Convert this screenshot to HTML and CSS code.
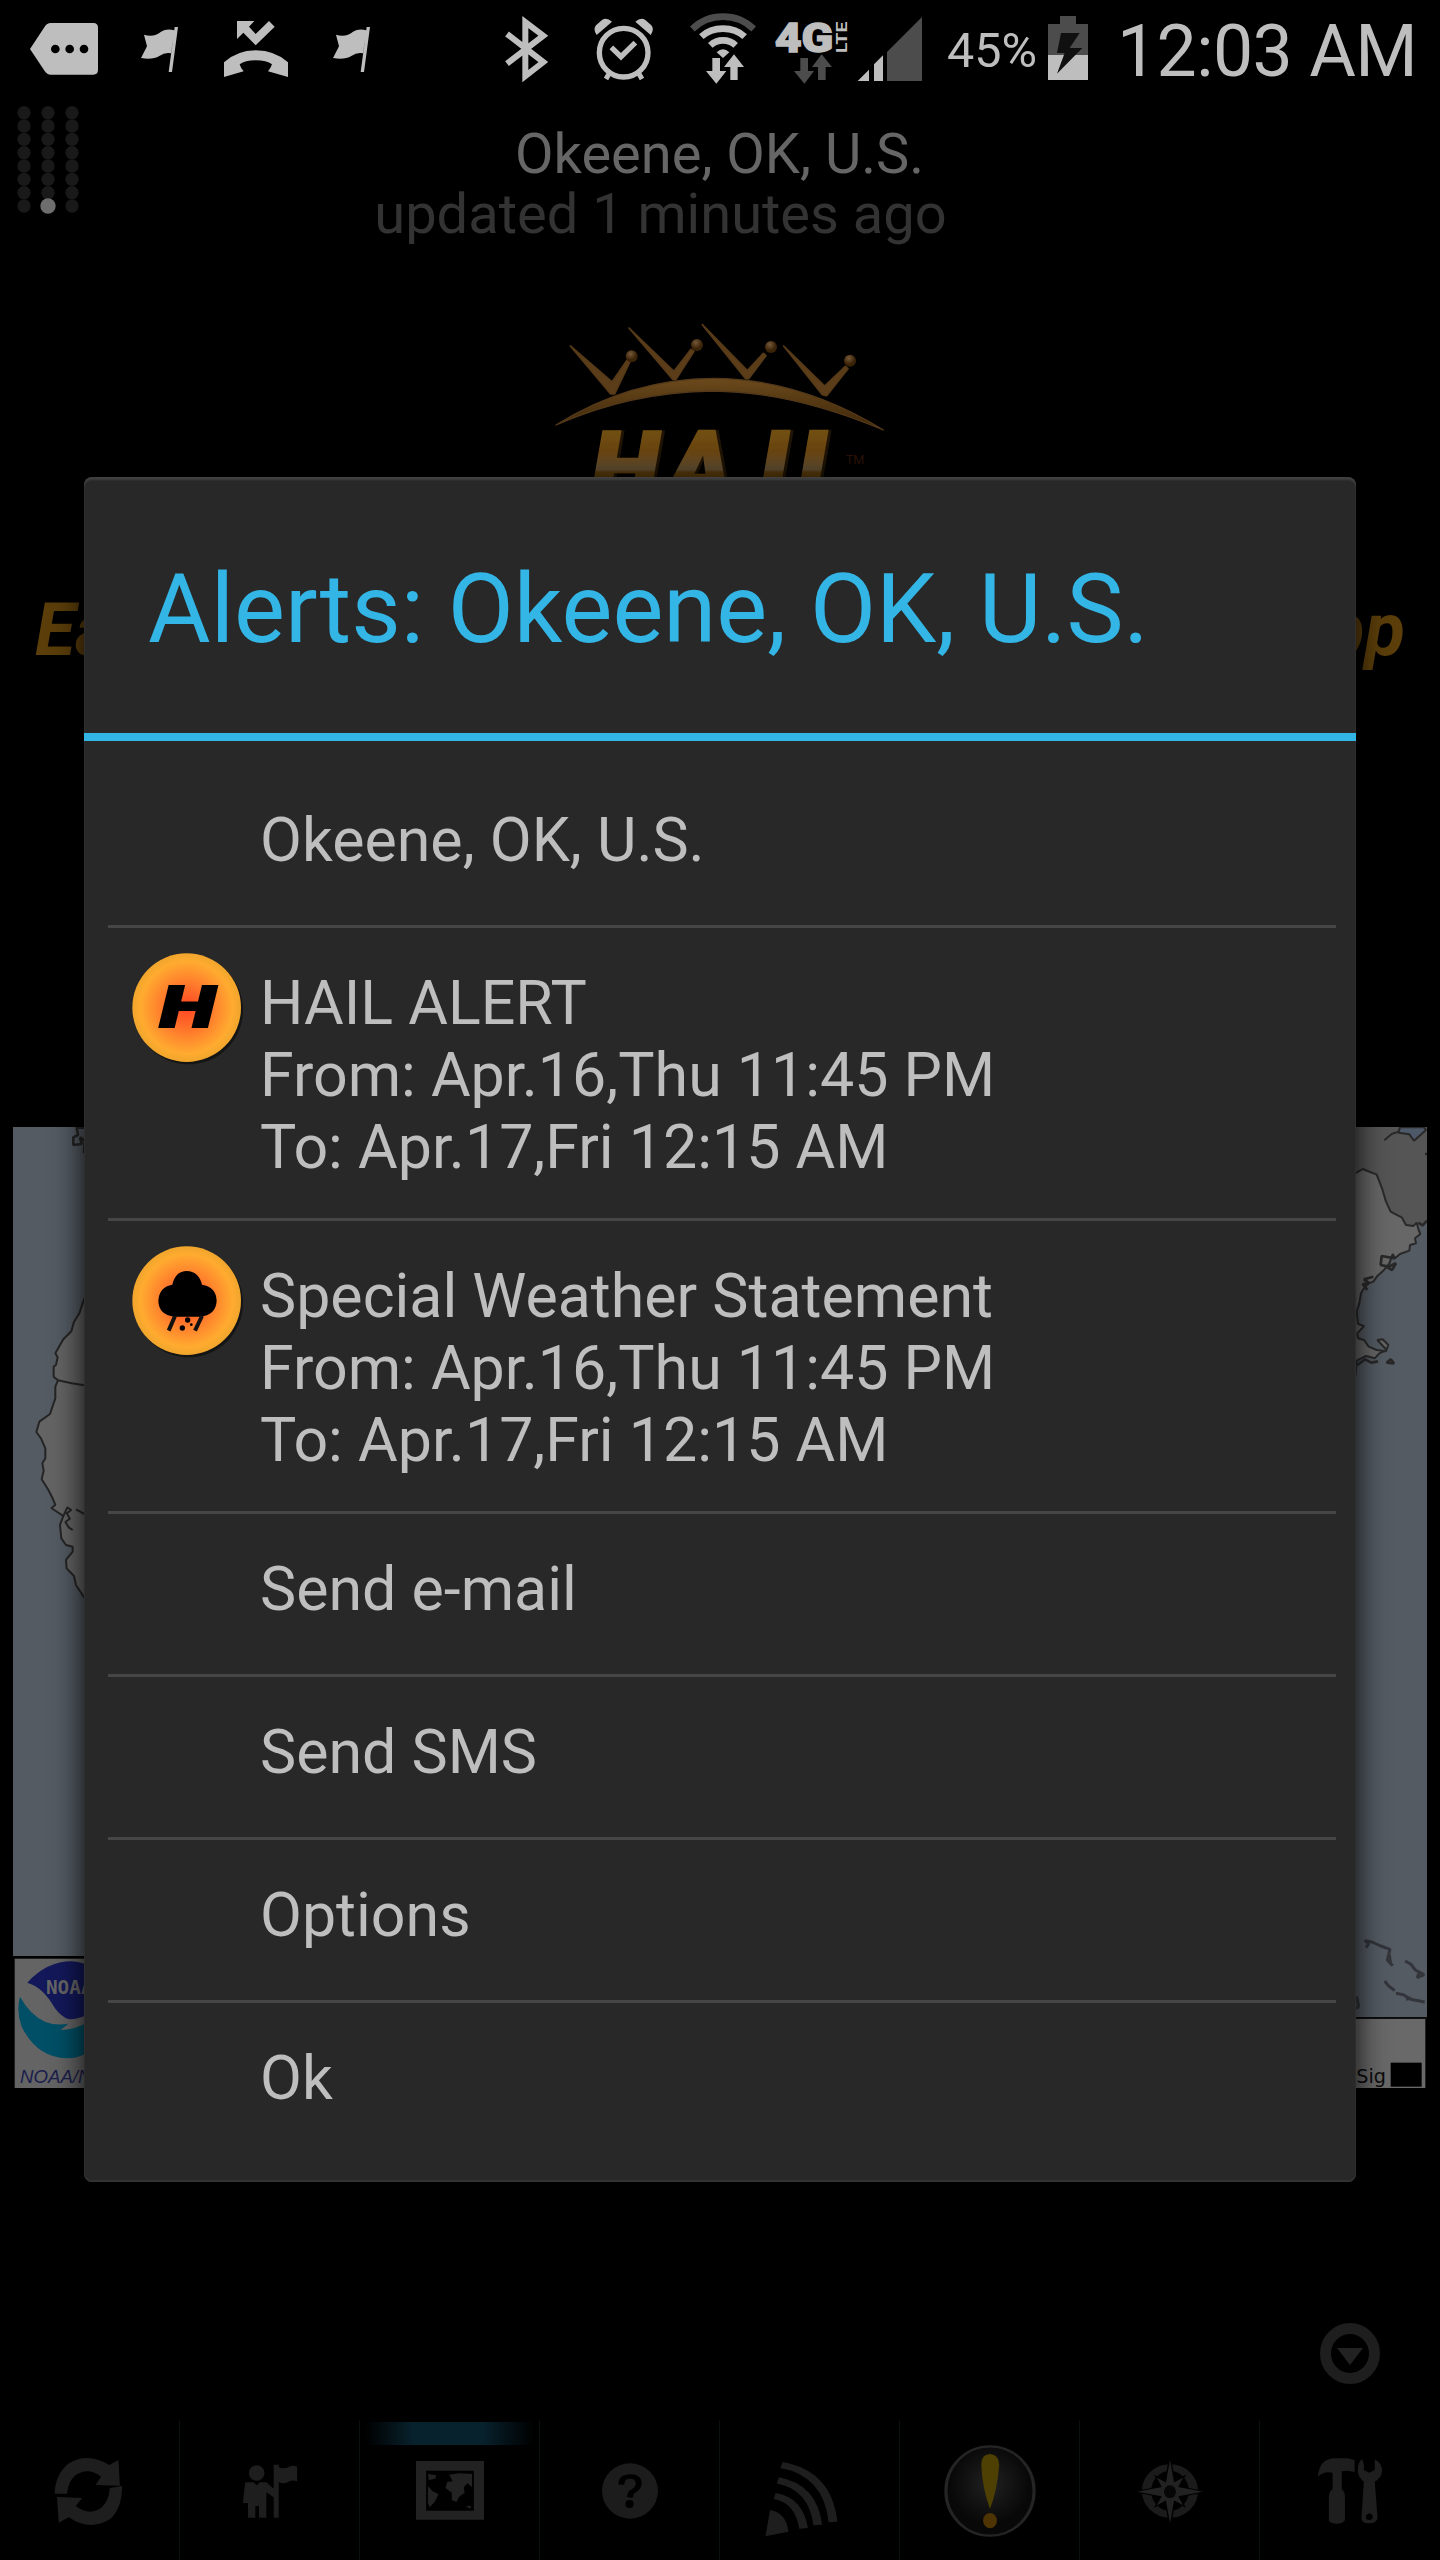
FILE: index.html
```html
<!DOCTYPE html>
<html lang="en">
<head>
  <meta charset="UTF-8">
  <title>Hail Alerts</title>
  <link rel="stylesheet" href="styles.css">
</head>
<body>
  <div class="screen">

    <!-- Phone status bar -->
    <div class="status-bar">
      <svg class="st-message" width="68" height="100" viewBox="90 0 204 300">
        <path d="M90 147 L134 80 Q141 69 152 69 H280 Q294 69 294 83 V210 Q294 224 280 224 H152 Q141 224 134 213 Z" fill="#bebebe"/>
        <circle cx="166" cy="147" r="13"/><circle cx="209" cy="147" r="13"/><circle cx="252" cy="147" r="13"/>
      </svg>
      <svg class="st-flag" width="37" height="100" viewBox="423 0 111 300">
        <path d="M432 104 Q462 113 483 95 Q500 85 523 91 L513 160 Q495 156 478 168 Q458 180 423 174 L441 139 Z M524 81 H534 L516 216 H506 Z" fill="#bebebe"/>
      </svg>
      <svg class="st-missed" width="64" height="100" viewBox="672 0 192 300">
        <path d="M711 63 H763 L747 80 L767 102 L807 63 L824 80 L767 136 L730 98 L711 117 Z M672 231 V187 Q710 152 767 151 Q826 152 864 187 V231 L804 214 Q812 205 816 193 Q800 181 767 181 Q735 181 719 193 Q722 205 731 214 Z" fill="#bebebe"/>
      </svg>
      <svg class="st-flag2" width="37" height="100" viewBox="423 0 111 300">
        <path d="M432 104 Q462 113 483 95 Q500 85 523 91 L513 160 Q495 156 478 168 Q458 180 423 174 L441 139 Z M524 81 H534 L516 216 H506 Z" fill="#bebebe"/>
      </svg>
      <svg class="st-bluetooth" width="45" height="100" viewBox="75 0 135 300">
        <path d="M81 102 L190 186 L136 228 V66 L190 107 L81 191" fill="none" stroke="#bebebe" stroke-width="18"/>
      </svg>
      <svg class="st-alarm" width="60" height="100" viewBox="342 0 180 300">
        <g fill="none" stroke="#bebebe">
          <circle cx="431" cy="158" r="73" stroke-width="16"/>
          <path d="M394 142 L423 170 L466 128" stroke-width="16"/>
          <path d="M388 220 L378 237 M476 220 L486 237" stroke-width="15"/>
        </g>
        <path d="M350 105 Q338 88 348 76 L366 60 Q380 51 396 65 Z M512 105 Q524 88 514 76 L496 60 Q482 51 466 65 Z" fill="#bebebe"/>
      </svg>
      <svg class="st-wifi" width="66" height="100" viewBox="630 0 198 300">
        <g fill="none" stroke="#bebebe" stroke-width="20">
          <path d="M637 87 Q675 50 729 50 Q783 50 821 87" stroke="#4c4c4c"/>
          <path d="M664 110 Q690 86 729 86 Q768 86 794 110"/>
          <path d="M691 136 Q707 121 729 121 Q751 121 767 136"/>
        </g>
        <path d="M710 157 Q729 139 748 157 L729 174 Z M697 174 H720 V213 H739 L709 251 L678 213 H697 Z M751 240 V201 H732 L762 163 L792 201 H773 V240 Z" fill="#bebebe"/>
      </svg>
      <svg class="st-lte" width="74" height="100" viewBox="885 0 222 300">
        <text class="net-4g" x="884" y="155" textLength="176" lengthAdjust="spacingAndGlyphs">4G</text>
        <text class="net-lte" transform="translate(1101 159) rotate(-90)" textLength="94" lengthAdjust="spacingAndGlyphs">LTE</text>
        <path d="M961 174 H984 V213 H1002 L973 251 L942 213 H961 Z M1014 240 V201 H996 L1025 163 L1056 201 H1037 V240 Z" fill="#4c4c4c"/>
      </svg>
      <svg class="st-signal" width="65" height="100" viewBox="1131 0 195 300">
        <path d="M1133 243 L1167 209 V243 Z M1182 243 V193 L1209 166 V243 Z" fill="#bebebe"/>
        <path d="M1221 243 V156 L1326 51 V243 Z" fill="#4c4c4c"/>
      </svg>
      <span class="battery-text">45%</span>
      <svg class="st-battery" width="40" height="100" viewBox="264 0 120 300">
        <path d="M300 48 H348 V72 H384 V165 H264 V72 H300 Z" fill="#4c4c4c"/>
        <path d="M264 165 H384 V240 H264 Z" fill="#bebebe"/>
        <path d="M303 99 H359 L329 144 H367 L291 221 L314 159 H291 Z" fill="#101010"/>
      </svg>
      <span class="clock">12:03 AM</span>
    </div>

    <!-- Location header -->
    <div class="header">
      <svg class="page-dots" width="63" height="110" viewBox="50 315 189 330">
        <defs>
          <g id="dotColumn" fill="#191919">
            <circle cx="71" cy="338" r="20"/><circle cx="71" cy="378" r="20"/><circle cx="71" cy="418" r="20"/><circle cx="71" cy="458" r="20"/>
            <circle cx="71" cy="498" r="20"/><circle cx="71" cy="538" r="20"/><circle cx="71" cy="578" r="20"/><circle cx="71" cy="618" r="20"/>
          </g>
        </defs>
        <use href="#dotColumn"/><use href="#dotColumn" x="72"/><use href="#dotColumn" x="144"/>
        <circle cx="143" cy="618" r="23" fill="#6e6e6e"/>
      </svg>
      <div class="header-text">
        <div class="location">Okeene, OK, U.S.</div>
        <div class="updated">updated 1 minutes ago</div>
      </div>
    </div>

    <svg class="logo" width="480" height="200" viewBox="0 0 1440 600">
      <defs>
        <linearGradient id="arcGold" x1="0" y1="0" x2="0" y2="1">
          <stop offset="0" stop-color="#6b4a1c"/><stop offset="1" stop-color="#3c2508"/>
        </linearGradient>
        <linearGradient id="letterGold" gradientUnits="userSpaceOnUse" x1="0" y1="390" x2="0" y2="600">
          <stop offset="0" stop-color="#714f12"/><stop offset="0.3" stop-color="#6a4510"/>
          <stop offset="0.57" stop-color="#655235"/><stop offset="0.6" stop-color="#5c3d0c"/><stop offset="1" stop-color="#5c3d0c"/>
        </linearGradient>
        <radialGradient id="ballGold" cx="0.4" cy="0.3">
          <stop offset="0" stop-color="#76583a"/><stop offset="1" stop-color="#3a2307"/>
        </radialGradient>
      </defs>
      <path d="M228 375 Q450 236 700 235 Q960 236 1210 390 Q940 276 700 273 Q450 276 228 375 Z" fill="url(#arcGold)" stroke="#53391a" stroke-width="4" stroke-linejoin="round"/>
      <path d="M271 138 L396 246 L440 182 L449 187 L404 282 L392 282 Z M447 84 L582 214 L633 148 L642 154 L588 238 L578 238 Z M667 74 L802 212 L850 160 L858 167 L806 236 L797 236 Z M911 138 L1034 258 L1096 199 L1104 206 L1040 287 L1027 284 Z" fill="#5c3d19" stroke="#573a18" stroke-width="5" stroke-linejoin="round"/>
      <circle cx="455" cy="169" r="18" fill="url(#ballGold)"/>
      <circle cx="651" cy="135" r="18" fill="url(#ballGold)"/>
      <circle cx="873" cy="141" r="18" fill="url(#ballGold)"/>
      <circle cx="1110" cy="182" r="18" fill="url(#ballGold)"/>
      <text class="logo-letters" x="334 562 838 955" y="603">HAIL</text>
      <text class="logo-tm" x="1097" y="491">TM</text>
    </svg>

    <div class="slogan"><span>Ea</span><span>pp</span></div>

    <!-- Radar map -->
    <svg class="map" width="1414" height="961" viewBox="13 1127 1414 961">
      <path d="M13 1127 H1427 V2017 H700 V1956 H13 Z" fill="#545b63"/>
      <g transform="translate(0 1120) scale(0.33333)" stroke="#252525" stroke-width="6" stroke-linejoin="bevel">
        <path d="M300 450 L252 538 L238 580 L222 606 L214 634 L190 658 L166 700 L173 712 L168 735 L161 740 L161 770 L174 781 L166 800 L166 835 L150 882 L118 905 L109 936 L123 955 L136 985 L136 1015 L127 1030 L131 1052 L125 1078 L144 1108 L158 1135 L166 1155 L154 1164 L190 1188 L180 1215 L184 1255 L198 1275 L218 1280 L218 1295 L198 1320 L200 1345 L222 1368 L228 1395 L252 1432 L300 1480 Z" fill="#646464"/>
        <path d="M174 781 L215 790 L300 803 M190 1188 L202 1162 L214 1170 L200 1180 L210 1196 L196 1206 L206 1222 L218 1230 M228 1168 L255 1183" fill="none"/>
        <path d="M252 23 L230 22 L234 45 L220 52 L220 75 L245 72 L240 52 L254 62 L252 100" fill="none" stroke-width="8"/>
      </g>
      <g transform="translate(1350 1120) scale(0.33333)" stroke="#292929" stroke-width="6" stroke-linejoin="bevel">
        <path d="M0 22 H231 V302 L220 314 L200 308 L190 318 L168 315 L155 292 L122 275 L80 166 L40 147 L0 160 Z" fill="#555" stroke="none"/>
        <path d="M0 160 L20 158 L38 147 L80 164 L96 205 L108 245 L122 275 L143 286 L155 292 L168 315 L190 318 L200 308 L206 330 L211 342 L195 355 L198 370 L180 375 L178 392 L150 402 L135 415 L128 402 L118 430 L102 450 L82 468 L70 485 L55 490 L42 505 L33 520 L28 550 L20 575 L24 612 L42 618 L22 640 L24 655 L42 660 L56 680 L80 690 L108 694 L115 675 L98 658 L82 660 L110 690 L88 700 L74 715 L48 708 L20 722 L16 770 L0 770 Z" fill="#676767"/>
        <path d="M231 302 L218 316 L205 308 M135 415 L95 408 L92 435 L115 440 L138 430 L126 450 L108 440 M70 470 L42 478 L58 490 L38 492 L52 510 M22 735 L45 718 L64 728 L84 724 M110 728 L122 718 L132 730 Z" fill="none" stroke-width="8"/>
        <path d="M150 22 L145 38 L178 43 L192 62 L228 30 L222 22 Z" fill="#4d5869"/>
        <path d="M103 61 L125 42 L148 34 M228 98 V106" fill="none"/>
      </g>
      <g transform="translate(1340 1900) scale(0.33333)" stroke="#33353b" stroke-width="9" fill="none" stroke-linejoin="bevel">
        <path d="M78 143 L86 131 L74 122 L96 126 L122 138 L150 148 L142 180 L158 197 M148 165 L152 192 M195 183 L212 192 L226 210 L252 224 L232 233 L236 220 M134 243 L145 257 L164 272 M168 280 L190 284 L212 298 L254 306 M198 298 L214 294 M50 290 L56 320 L48 325"/>
      </g>
      <g transform="translate(1340 1900) scale(0.33333)">
        <rect x="0" y="352" width="264" height="5" fill="#111"/>
        <rect x="0" y="357" width="256" height="208" fill="#696969"/>
        <text class="map-sig" x="49" y="548" textLength="89" lengthAdjust="spacingAndGlyphs">Sig</text>
        <rect x="152" y="488" width="93" height="72" fill="#000"/>
      </g>
      <!-- NOAA badge -->
      <g transform="translate(0 1900) scale(0.33333)">
        <rect x="44" y="176" width="300" height="390" fill="#646464"/>
        <path d="M82 248 Q140 184 216 184 Q290 190 330 250 L270 340 Q235 360 205 357 Q185 352 165 325 Q130 262 82 248 Z" fill="#13185a"/>
        <path d="M60 290 Q90 345 135 365 Q165 378 205 371 L182 390 Q235 390 300 345 Q300 475 200 475 Q110 472 65 380 Q48 335 60 290 Z" fill="#004f66"/>
        <text class="noaa-logo" x="138" y="282">NOAA</text>
        <text class="noaa-name" x="60" y="549">NOAA/NWS</text>
      </g>
    </svg>

    <svg class="expand" width="60" height="61" viewBox="0 0 60 61">
      <ellipse cx="30" cy="30.5" rx="24.5" ry="25" fill="none" stroke="#1e1e1e" stroke-width="11"/>
      <path d="M17 25 H43 L30 42 Z" fill="#222"/>
    </svg>

    <!-- Bottom toolbar -->
    <div class="toolbar">
      <div class="tab">
        <svg viewBox="0 60 392 420" preserveAspectRatio="none" fill="#1e1e1e">
          <path d="M119 281 Q120 225 148 192 Q190 155 238 195 L258 180 L261 257 L208 255 L220 230 Q192 200 165 225 Q148 245 146 281 Z"/>
          <path d="M266 258 Q266 325 240 357 Q195 395 150 352 L128 368 L124 291 L179 294 L165 318 Q195 350 222 322 Q238 300 239 264 Z"/>
        </svg>
      </div>
      <div class="tab">
        <svg viewBox="392 60 392 420" preserveAspectRatio="none" fill="#1e1e1e">
          <ellipse cx="559" cy="219" rx="17" ry="23"/>
          <path d="M534 247 H552 L559 256 L566 247 H580 L596 266 V194 H607 V202 Q618 208 630 200 Q638 194 647 200 V244 Q635 238 627 246 Q617 254 607 246 V353 H596 V292 L580 277 V353 H564 V318 H556 V353 H540 V309 H529 Z"/>
        </svg>
      </div>
      <div class="tab active">
        <svg viewBox="784 60 392 420" preserveAspectRatio="none" fill="#222">
          <path fill-rule="evenodd" d="M906 183 H1054 V359 H906 Z M928 212 V332 H1032 V212 Z"/>
          <path d="M932 222 L950 226 L948 236 L934 240 Z M932 258 L942 274 L955 282 L948 303 L936 322 L932 310 Z M978 224 L1000 220 L1028 222 V262 L1018 250 L1010 262 L1012 278 L1000 290 L994 306 L984 300 L984 278 L970 264 L974 246 L986 244 Z M1014 318 L1026 318 L1024 326 Z"/>
        </svg>
      </div>
      <div class="tab">
        <svg viewBox="1176 60 392 420" preserveAspectRatio="none">
          <ellipse cx="1372" cy="273" rx="61" ry="83" fill="#1c1c1c"/>
          <path d="M1353 254 Q1353 229 1373 229 Q1392 230 1391 253 Q1388 268 1375 277 L1371 292" fill="none" stroke="#000" stroke-width="13"/>
          <ellipse cx="1371" cy="312" rx="9" ry="12"/>
        </svg>
      </div>
      <div class="tab">
        <svg viewBox="0 360 392 420" preserveAspectRatio="none">
          <path d="M109 630 Q145 640 149 695 L99 709 Z" fill="#1e1e1e"/>
          <path d="M119 588 Q172 600 182 685 M126 541 Q202 560 213 675 M134 495 Q235 520 246 666" fill="none" stroke="#1e1e1e" stroke-width="19"/>
        </svg>
      </div>
      <div class="tab">
        <svg viewBox="392 360 392 420" preserveAspectRatio="none">
          <defs>
            <radialGradient id="alertGlass" cy="0.42"><stop offset="0" stop-color="#212121"/><stop offset="0.9" stop-color="#080808"/></radialGradient>
          </defs>
          <ellipse cx="588" cy="573" rx="96" ry="134" fill="url(#alertGlass)" stroke="#242424" stroke-width="7"/>
          <path d="M569 493 Q570 462 588 462 Q608 464 608 495 Q604 570 588 627 Q571 565 569 493 Z" fill="#4d4002"/>
          <ellipse cx="588" cy="662" rx="15" ry="23" fill="#4d3402"/>
        </svg>
      </div>
      <div class="tab">
        <svg viewBox="784 360 392 420" preserveAspectRatio="none">
          <ellipse cx="980" cy="573" rx="51" ry="70" fill="none" stroke="#1b1b1b" stroke-width="20"/>
          <path d="M980 468 L990 545 L1012 528 L1000 560 L1058 575 L1000 590 L1012 620 L990 604 L980 682 L970 604 L948 620 L960 590 L902 575 L960 560 L948 528 L970 545 Z" fill="#222" stroke="#000" stroke-width="3"/>
          <ellipse cx="980" cy="575" rx="13" ry="19" fill="#060606"/>
        </svg>
      </div>
      <div class="tab">
        <svg viewBox="1176 360 392 420" preserveAspectRatio="none" fill="#1e1e1e">
          <path d="M1302 530 Q1305 480 1335 475 H1366 L1382 480 V516 L1366 512 L1354 514 V568 Q1361 575 1361 590 V660 Q1358 671 1342 671 Q1326 670 1326 660 V590 Q1326 575 1334 568 V518 Q1315 512 1302 530 Z"/>
          <path fill-rule="evenodd" d="M1398 478 Q1404 490 1402 510 L1414 518 L1426 510 V478 Q1442 490 1442 514 Q1440 535 1426 545 L1432 655 Q1430 670 1414 670 Q1396 670 1397 655 L1402 545 Q1388 530 1389 508 Q1389 488 1398 478 Z M1414 640 Q1405 644 1407 656 Q1414 664 1421 656 Q1423 643 1414 640 Z"/>
        </svg>
      </div>
    </div>

    <!-- Alerts dialog -->
    <div class="dialog">
      <h1 class="dialog-title">Alerts: Okeene, OK, U.S.</h1>
      <ul class="alert-list">
        <li class="alert-item">Okeene, OK, U.S.</li>
        <li class="alert-item with-icon">
          <svg class="alert-icon" width="116" height="116" viewBox="92 62 348 348">
            <defs>
              <radialGradient id="badge"><stop offset="0" stop-color="#ff4422"/><stop offset="0.45" stop-color="#ff7a2c"/><stop offset="0.85" stop-color="#ffab30"/><stop offset="1" stop-color="#f0a52c"/></radialGradient>
            </defs>
            <circle cx="268" cy="239" r="163" fill="#151515"/>
            <circle cx="262" cy="232" r="163" fill="url(#badge)"/>
            <text class="badge-letter" x="181" y="291" textLength="166" lengthAdjust="spacingAndGlyphs">H</text>
          </svg>
          <div>HAIL ALERT<br>From: Apr.16,Thu 11:45 PM<br>To: Apr.17,Fri 12:15 AM</div>
        </li>
        <li class="alert-item with-icon">
          <svg class="alert-icon" width="116" height="116" viewBox="92 940 348 348">
            <circle cx="268" cy="1117" r="163" fill="#151515"/>
            <circle cx="262" cy="1110" r="163" fill="url(#badge)"/>
            <path d="M225 1158 Q178 1152 177 1110 Q180 1068 219 1062 Q228 1022 262 1021 Q298 1022 308 1062 Q350 1068 352 1110 Q350 1152 304 1158 Z"/>
            <path d="M227 1156 L208 1200 M308 1156 L287 1200" stroke="#111" stroke-width="12"/>
            <circle cx="265" cy="1168" r="8"/><circle cx="249" cy="1192" r="8"/><circle cx="276" cy="1182" r="4"/>
          </svg>
          <div>Special Weather Statement<br>From: Apr.16,Thu 11:45 PM<br>To: Apr.17,Fri 12:15 AM</div>
        </li>
        <li class="alert-item">Send e-mail</li>
        <li class="alert-item">Send SMS</li>
        <li class="alert-item">Options</li>
        <li class="alert-item">Ok</li>
      </ul>
    </div>
  </div>
</body>
</html>
```

FILE: styles.css
```css
body {
  font-family: Roboto, "Liberation Sans", sans-serif;
  background-color: #000;
  margin: 0;
  padding: 0;
}

svg {
  display: block;
  flex-shrink: 0;
}

.screen {
  position: relative;
  width: 1440px;
  height: 2560px;
  overflow: hidden;
  display: flex;
  flex-direction: column;
  background-color: #000;
}

/* status bar */
.status-bar {
  display: flex;
  height: 100px;
  padding-left: 30px;
  color: #bebebe;
  white-space: nowrap;
}

.st-flag {
  margin-left: 43px;
}

.st-missed {
  margin-left: 46px;
}

.st-flag2 {
  margin-left: 45px;
}

.st-bluetooth {
  margin-left: 135px;
}

.st-alarm {
  margin-left: 44px;
}

.st-wifi {
  margin-left: 36px;
}

.st-lte {
  margin-left: 19px;
  overflow: visible;
}

.st-signal {
  margin-left: 8px;
}

.net-4g {
  font-size: 121px;
  font-weight: 900;
  fill: #bebebe;
  stroke: #bebebe;
  stroke-width: 4px;
}

.net-lte {
  font-size: 46px;
  font-weight: 700;
  fill: #bebebe;
}

.battery-text {
  width: 100px;
  margin-left: 25px;
  font-size: 48.5px;
  line-height: 101px;
}

.st-battery {
  margin-left: 1px;
}

.clock {
  margin-left: 29px;
  font-size: 71.5px;
  letter-spacing: -0.6px;
  line-height: 104px;
}

/* header */
.header {
  display: flex;
  height: 144px;
}

.page-dots {
  margin: 5px 0 0 17px;
}

.header-text {
  flex: 1;
  padding: 24px 81px 0 0;
  text-align: center;
  font-size: 56px;
  line-height: 60px;
}

.location {
  color: #666;
}

.updated {
  padding-right: 118px;
  color: #333;
}

.logo {
  align-self: center;
  margin-top: 56px;
}

.logo-letters {
  font-size: 296px;
  font-weight: 900;
  font-style: italic;
  fill: url(#letterGold);
  stroke: url(#letterGold);
  stroke-width: 8px;
  filter: drop-shadow(9px 1px 0 #1f1405);
}

.logo-tm {
  font-size: 38px;
  fill: #2b1206;
}

.slogan {
  display: flex;
  justify-content: space-between;
  margin-top: 90px;
  padding: 0 35px 0 35px;
  color: #5b3e0a;
  font-size: 74px;
  font-weight: 700;
  font-style: italic;
  line-height: 80px;
}

/* map */
.map {
  align-self: center;
  margin-top: 457px;
}

.map-sig {
  font-family: "DejaVu Sans", sans-serif;
  font-size: 60px;
  fill: #0c0c0c;
}

.noaa-logo {
  font-family: "DejaVu Sans Mono", monospace;
  font-size: 58px;
  font-weight: 700;
  fill: #666;
}

.noaa-name {
  font-family: "Liberation Sans", Arial, sans-serif;
  font-size: 56px;
  font-style: italic;
  fill: #1b1e4c;
}

.expand {
  margin: 235px 0 36px 1320px;
}

/* bottom toolbar */
.toolbar {
  display: flex;
  height: 140px;
}

.tab {
  box-sizing: border-box;
  width: 180px;
  border-right: 1px solid #0a0f12;
}

.tab:last-child {
  border-right: none;
}

.tab svg {
  width: 180px;
  height: 140px;
}

.tab.active {
  background: linear-gradient(to right, #000 3%, #08222d 30%, #08222d 68%, #000 97%) 0 2px / 100% 23px no-repeat;
}

/* dialog */
.dialog {
  position: absolute;
  top: 477px;
  left: 84px;
  box-sizing: border-box;
  width: 1272px;
  height: 1705px;
  background-color: #282828;
  border-radius: 8px;
  box-shadow: inset 0 3px 2px #404040, inset 0 -2px 1px #333, 0 4px 32px rgba(0, 0, 0, 0.9);
}

.dialog-title {
  box-sizing: border-box;
  height: 264px;
  margin: 0;
  padding: 76px 0 0 64px;
  border-bottom: 8px solid #33b5e5;
  color: #33b5e5;
  font-size: 96px;
  font-weight: 400;
  line-height: 112px;
}

.alert-list {
  list-style: none;
  margin: 0 20px 0 24px;
  padding: 24px 0 0;
}

.alert-item {
  box-sizing: border-box;
  height: 163px;
  padding: 40px 0 0 152px;
  border-bottom: 3px solid #464646;
  color: #bebebe;
  font-size: 60.9px;
  line-height: 72px;
  white-space: nowrap;
}

.alert-item.with-icon {
  display: flex;
  height: 293px;
  padding-left: 22px;
}

.alert-item:last-child {
  border-bottom: none;
}

.alert-icon {
  margin: -17px 14px 0 0;
}

.badge-letter {
  font-size: 170px;
  font-weight: 900;
  font-style: italic;
  stroke: #000;
  stroke-width: 6px;
}
```
